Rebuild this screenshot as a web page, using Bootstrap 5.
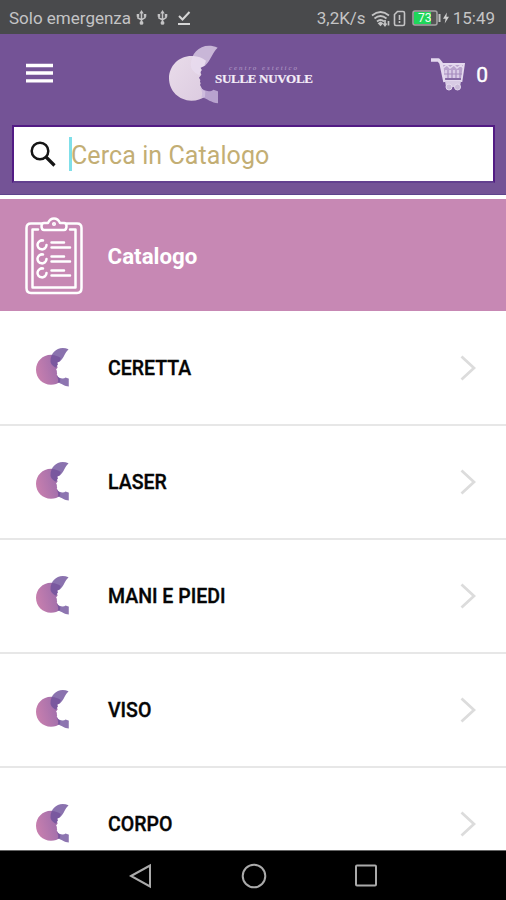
<!DOCTYPE html>
<html lang="it">
<head>
<meta charset="utf-8">
<meta name="viewport" content="width=device-width, initial-scale=1">
<title>Sulle Nuvole - Catalogo</title>
<link href="https://cdn.jsdelivr.net/npm/bootstrap@5.3.0/dist/css/bootstrap.min.css" rel="stylesheet">
<style>
  body { font-family: Roboto, "Noto Sans", sans-serif; background: #fff; }
  svg { display: block; flex: none; }
  .screen { width: 506px; height: 900px; }
  .status { height: 34px; background: #494a4c; color: #c4c4c5; font-size: 17px; line-height: 34px; padding: 2px 11px 0 9px; }
  .usb-first { margin-left: 5px; }
  .usb-next { margin-left: 10px; }
  .done { margin-left: 9px; }
  .wifi { margin-left: 5px; }
  .sim { margin-left: 2px; }
  .battery { margin-left: 6px; }
  .bolt { margin: 0 4px 0 2px; }
  .top { height: 161px; background: #745396; border-bottom: 1px solid #5f448c; }
  .bar { height: 88px; padding: 0 18px 0 26px; }
  .menu { margin-top: -10px; }
  .brand-mark { margin: -6px 0 0 115px; }
  .brand-text { width: 100px; margin: -7px 0 0 -3px; font-family: "Liberation Serif", serif; color: #f4edf8; white-space: nowrap; }
  .brand-top { font-size: 7px; line-height: 8px; font-style: italic; letter-spacing: 1.95px; color: #b69fc9; padding-left: 14px; }
  .brand-name { font-size: 13px; line-height: 13px; font-weight: 700; letter-spacing: -.3px; -webkit-text-stroke: .2px #f4edf8; }
  .cart { margin-top: -9px; }
  .count { font-size: 21px; font-weight: 400; line-height: 24px; margin: -7px 0 0 10px; -webkit-text-stroke: .4px #fff; }
  .search { height: 58px; margin: 3px 11px 0 12px; border: 2px solid #521b84; border-bottom-color: #63408f; background: #fff; padding-left: 16px; }
  .caret { width: 3px; height: 34px; background: #7fdfe9; margin-left: 12px; }
  .hint { color: #c3ae74; font-size: 25px; line-height: 34px; letter-spacing: .08px; margin: 4px 0 0 -1px; }
  .title-row { height: 112px; margin-top: 4px; background: #c788b4; padding-left: 25px; font-size: 22.3px; }
  .title-row svg { margin-top: 1px; }
  .title-row span { margin: 3px 0 0 24.600px; }
  .entries { height: 539px; padding-top: 1px; }
  .list-group-flush > .entry, .list-group-flush > .entry:last-child { height: 114px; flex: none; border: 0; border-bottom: 2px solid #e7e7e7; border-radius: 0; color: #050505; font-size: 19.5px; font-weight: 500; padding: 0 30px 0 36px; -webkit-text-stroke: .35px #050505; }
  .entry .moon { margin-top: -2px; }
  .entry span { margin: 2px 0 0 39px; }
  .keys { height: 50px; background: #000; border-top: 1px solid #666; padding: 0 129px 0 129px; }
</style>
</head>
<body>
<svg width="0" height="0" class="position-absolute" aria-hidden="true">
  <defs>
    <linearGradient id="rose" x1="0" y1=".6" x2="1" y2=".3"><stop offset="0" stop-color="#c87fae"/><stop offset="1" stop-color="#9a6cab"/></linearGradient>
    <linearGradient id="pale" x1="0" y1="0" x2="1" y2="1"><stop offset="0" stop-color="#e9dcea"/><stop offset="1" stop-color="#dccbe0"/></linearGradient>
    <path id="disc" d="M130 63C89 60 57 91 57 130C57 168 87 197 124 197C142 197 154 192 165 185L166 169C157 165 155 160 153 155L150 150L152 145L150 140L151 135L147 128L154 119L151 111L155 105L151 98L163 92L168 77C157 68 143 64 130 63Z"/>
    <path id="wing" d="M122 91C123 48 160 20 203 38C186 54 184 74 165 92L152 98L155 105L147 121C136 114 123 106 122 91Z"/>
    <path id="tail" d="M150 157C160 168 180 173 190 164C199 168 206 166 204 174L204 205C186 205 170 190 154 187C158 178 157 168 150 157Z"/>
    <symbol id="moon" viewBox="57 33 148 173"><use href="#disc" fill="url(#rose)"/><use href="#wing" fill="#70539c" fill-opacity=".82"/><use href="#tail" fill="#70539c" fill-opacity=".8"/></symbol>
    <symbol id="next" viewBox="0 0 16 26"><path d="M1.500 1.500L14 13L1.500 24.500" fill="none" stroke="#dcdcdc" stroke-width="2.800"/></symbol>
    <symbol id="usb" viewBox="0 0 12 18"><path d="M6 3V15M2 6V9L6 11L10 8.500V6" fill="none" stroke="#c4c4c5" stroke-width="1.700"/><path d="M6 0L8.500 4H3.500Z" fill="#c4c4c5"/><circle cx="6" cy="14.500" r="2.200" fill="#c4c4c5"/><path d="M.6 4.500H3.400V7.500H.6ZM8.600 4.500H11.400V7.500H8.600Z" fill="#c4c4c5"/></symbol>
  </defs>
</svg>
<main class="screen d-flex flex-column overflow-hidden">
  <div class="status d-flex align-items-center flex-shrink-0">
    <span>Solo emergenza</span>
    <svg class="usb-first" width="11" height="16"><use href="#usb"/></svg>
    <svg class="usb-next" width="11" height="16"><use href="#usb"/></svg>
    <svg class="done" width="14" height="16" viewBox="0 0 14 16" fill="none" stroke="#d6d6d6" stroke-width="2"><path d="M2 6L5.500 9.500L12.500 2M1 14H13"/></svg>
    <span class="ms-auto">3,2K/s</span>
    <svg class="wifi" width="20" height="17" viewBox="0 0 20 17" fill="none" stroke="#c4c4c5" stroke-width="1.700"><path d="M1 5.500Q9.500-1.500 18 5.500M3.500 8.500Q9.500 3.500 15.500 8.500M6 11.500Q9.500 8.500 13 11.500"/><path d="M8 13.500L9.500 12.500L11 13.500L9.500 15ZM14 10V15M12.500 13.500L14 15.500L15.500 13.500M17.500 15.500V11"/></svg>
    <svg class="sim" width="13" height="17" viewBox="0 0 13 17" fill="none" stroke="#c4c4c5" stroke-width="1.600"><path d="M4.500 1.500H10Q11.500 1.500 11.500 3V14Q11.500 15.500 10 15.500H3Q1.500 15.500 1.500 14V4.500ZM6.500 5V10M6.500 11V13"/></svg>
    <svg class="battery" width="29" height="16" viewBox="0 0 29 16"><rect x="1" y="1" width="24" height="14" rx="2" fill="#555" stroke="#a5a5a5" stroke-width="1.500"/><path d="M2 2H19V14H2Z" fill="#1fd65a"/><path d="M27.500 4V12" stroke="#c4c4c5" stroke-width="2"/><text x="6" y="12.300" font-family="Roboto,sans-serif" font-size="12" fill="#effff2">73</text></svg>
    <svg class="bolt" width="6" height="12" viewBox="0 0 7 13"><path d="M4.500 0L0 7.500H3L2 13L7 5H4Z" fill="#d0d0d0"/></svg>
    <span>15:49</span>
  </div>
  <header class="top flex-shrink-0">
    <nav class="bar d-flex align-items-center text-white">
      <svg class="menu" width="27" height="21" viewBox="0 0 27 21" stroke="#fff" stroke-width="3.300"><path d="M0 2.500H27M0 10H27M0 17.800H27"/></svg>
      <svg class="brand-mark" width="50" height="62" viewBox="168 45 50 62">
        <g transform="translate(150 36) scale(.33333)"><use href="#disc" fill="url(#pale)"/><use href="#wing" fill="#e9ddf0" fill-opacity=".72"/><use href="#tail" fill="#c9b7dc" fill-opacity=".8"/></g>
      </svg>
      <div class="brand-text">
        <div class="brand-top">centro estetico</div>
        <div class="brand-name">SULLE NUVOLE</div>
      </div>
      <svg class="cart ms-auto" width="36" height="34" viewBox="0 0 36 34" fill="none" stroke="#e4d9ee">
        <path d="M1 3H8.500L11 6L15 25" stroke-width="3.500" stroke-linejoin="round"/>
        <path d="M12 7H34L31.500 24H15Z" fill="#b9a3cd" stroke-width="1.800"/>
        <path d="M13 11L17 8L20 11L24 8L27 11L31 8L33 11M16 13V21M20 13V21M24 13V21M28 13V21" stroke-width="1.500"/>
        <path d="M14 17H32" stroke="#a58bbd" stroke-width="1"/>
        <path d="M15 22H31" stroke="#765797" stroke-width="1.500"/>
        <path d="M15 24H31L30 30H16Z" fill="#d8cbe4" stroke="none"/><circle cx="19" cy="30" r="3" fill="#cabbd8"/><circle cx="27.500" cy="30" r="3" fill="#cabbd8"/>
      </svg>
      <span class="count">0</span>
    </nav>
    <div class="search d-flex align-items-center">
      <svg width="27" height="27" viewBox="0 0 27 27" fill="none" stroke="#151515"><circle cx="10" cy="10" r="8.300" stroke-width="2.500"/><path d="M16 16L24.500 24.500" stroke-width="3.200"/></svg>
      <div class="caret"></div>
      <span class="hint">Cerca in Catalogo</span>
    </div>
  </header>
  <div class="title-row d-flex align-items-center flex-shrink-0 text-white fw-bold">
    <svg width="58" height="78" viewBox="0 0 58 78" fill="none" stroke="#fff" stroke-width="2.500" stroke-linecap="round" stroke-linejoin="round">
      <path d="M16 6.500H6Q1.500 6.500 1.500 11V71Q1.500 76 6 76H52Q56.500 76 56.500 71V11Q56.500 6.500 52 6.500H42"/>
      <path d="M13 12.500H7.500V70.500H50.500V12.500H45"/>
      <path d="M19 6H23Q25 1.500 29 1.500Q33 1.500 35 6H39Q41.500 6 41.500 9Q41.500 13 39 13H19Q16.500 13 16.500 9Q16.500 6 19 6Z"/>
      <circle cx="29" cy="7" r=".8"/>
      <g id="line"><path d="M18 23.500A4.500 4.500 0 1 0 21.500 28M26.500 25.500H39M26.500 30.500H45" /></g>
      <use href="#line" y="14"/><use href="#line" y="28"/>
    </svg>
    <span>Catalogo</span>
  </div>
  <div class="entries list-group list-group-flush overflow-hidden flex-shrink-0">
    <a class="entry list-group-item d-flex align-items-center" href="#"><svg class="moon" width="33" height="39"><use href="#moon"/></svg><span>CERETTA</span><svg class="ms-auto" width="16" height="26"><use href="#next"/></svg></a>
    <a class="entry list-group-item d-flex align-items-center" href="#"><svg class="moon" width="33" height="39"><use href="#moon"/></svg><span>LASER</span><svg class="ms-auto" width="16" height="26"><use href="#next"/></svg></a>
    <a class="entry list-group-item d-flex align-items-center" href="#"><svg class="moon" width="33" height="39"><use href="#moon"/></svg><span>MANI E PIEDI</span><svg class="ms-auto" width="16" height="26"><use href="#next"/></svg></a>
    <a class="entry list-group-item d-flex align-items-center" href="#"><svg class="moon" width="33" height="39"><use href="#moon"/></svg><span>VISO</span><svg class="ms-auto" width="16" height="26"><use href="#next"/></svg></a>
    <a class="entry list-group-item d-flex align-items-center" href="#"><svg class="moon" width="33" height="39"><use href="#moon"/></svg><span>CORPO</span><svg class="ms-auto" width="16" height="26"><use href="#next"/></svg></a>
  </div>
  <div class="keys d-flex align-items-center justify-content-between flex-shrink-0">
    <svg width="24" height="26" viewBox="0 0 24 26"><path d="M2 13L21 2.500V23.500Z" fill="none" stroke="#aaa" stroke-width="2"/></svg>
    <svg width="26" height="26"><circle cx="13" cy="13" r="11.300" fill="none" stroke="#aaa" stroke-width="2"/></svg>
    <svg width="22" height="23"><rect x="1" y="1.500" width="20" height="20" rx="1" fill="none" stroke="#aaa" stroke-width="2"/></svg>
  </div>
</main>
<script src="https://cdn.jsdelivr.net/npm/bootstrap@5.3.0/dist/js/bootstrap.bundle.min.js"></script>
</body>
</html>
